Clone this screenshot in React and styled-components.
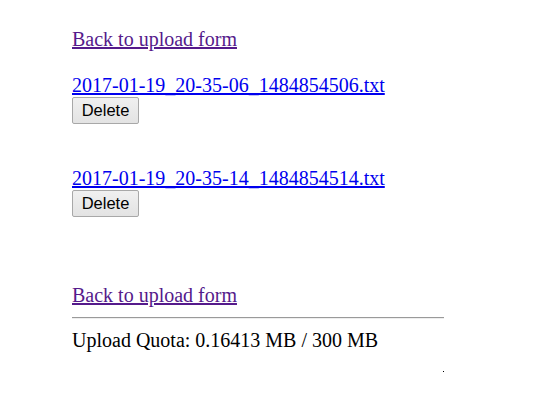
import React from 'react'
import styled, { createGlobalStyle } from 'styled-components'

const GlobalStyle = createGlobalStyle`
  html, body {
    margin: 0;
    padding: 0;
    background: #fff;
  }
  body {
    font-family: 'Liberation Serif', 'Times New Roman', serif;
    font-size: 20px;
    line-height: 23px;
    color: #000;
  }
`

const Main = styled.main`
  width: 372px;
  padding: 28px 0 0 72px;
`

const Back = styled.a`
  display: block;
  width: max-content;
  color: #551a8b;
  text-decoration: underline;
  margin-bottom: ${p => p.$gap || 0}px;
`

const FileEntry = styled.div`
  display: flex;
  flex-direction: column;
  align-items: flex-start;
  margin-bottom: ${p => p.$gap || 0}px;
`

const FileLink = styled.a`
  color: #0000ee;
  text-decoration: underline;
`

const DeleteButton = styled.button`
  font-family: 'Liberation Sans', Arial, sans-serif;
  font-size: 16.5px;
  line-height: 19px;
  color: #000;
  height: 27px;
  width: 67px;
  padding: 0;
  background: linear-gradient(#f0f0f0, #e3e3e3);
  border: 1px solid #a8a8a8;
  border-radius: 2px;
`

const Rule = styled.hr`
  margin: 10px 0 10px;
  border: none;
  border-top: 1px solid #9a9a9a;
  border-bottom: 1px solid #eee;
  height: 0;
`

const Quota = styled.p`
  margin: 0;
`

const Dot = styled.span`
  display: block;
  margin: 19px 0 0 auto;
  width: 1px;
  height: 1px;
  background: #000;
`

const files = [
  { name: '2017-01-19_20-35-06_1484854506.txt', gap: 43 },
  { name: '2017-01-19_20-35-14_1484854514.txt', gap: 67 }
]

const App = () => {
  return (
    <>
      <GlobalStyle />
      <Main>
        <Back href="#" $gap={23}>Back to upload form</Back>
        {files.map(file => (
          <FileEntry key={file.name} $gap={file.gap}>
            <FileLink href="#">{file.name}</FileLink>
            <DeleteButton>Delete</DeleteButton>
          </FileEntry>
        ))}
        <Back href="#">Back to upload form</Back>
        <Rule />
        <Quota>Upload Quota: 0.16413 MB / 300 MB</Quota>
        <Dot />
      </Main>
    </>
  )
}

export default App
